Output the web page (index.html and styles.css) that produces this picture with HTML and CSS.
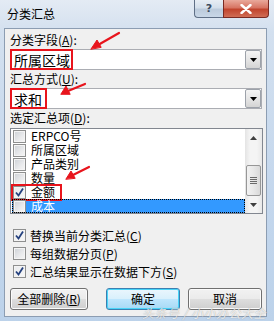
FILE: index.html
```html
<!DOCTYPE html>
<html lang="zh-CN">
<head>
    <meta charset="UTF-8">
    <title>分类汇总</title>
    <link rel="stylesheet" href="styles.css">
</head>
<body>
<div class="window">
    <div class="titlebar">
        <span class="title">分类汇总</span>
        <div class="caption-buttons">
            <span class="cap-btn help">?</span>
            <span class="cap-btn close">
                <svg width="12" height="10" viewBox="0 0 12 10"><path d="M1.5 1 L10.5 9 M10.5 1 L1.5 9" stroke="#fff" stroke-width="2.4" stroke-linecap="round"/></svg>
            </span>
        </div>
    </div>

    <div class="client">
        <div class="label">分类字段(<u>A</u>):</div>
        <div class="combo">
            <span class="value marked wide">所属区域</span>
            <span class="drop"><svg width="7" height="4" viewBox="0 0 7 4"><path d="M0 0 H7 L3.5 4 Z" fill="#000"/></svg></span>
        </div>

        <div class="label">汇总方式(<u>U</u>):</div>
        <div class="combo">
            <span class="value marked narrow">求和</span>
            <span class="drop"><svg width="7" height="4" viewBox="0 0 7 4"><path d="M0 0 H7 L3.5 4 Z" fill="#000"/></svg></span>
        </div>

        <div class="label last">选定汇总项(<u>D</u>):</div>
        <div class="listbox">
            <ul class="items">
                <li><span class="cb"></span>ERPCO号</li>
                <li><span class="cb"></span>所属区域</li>
                <li><span class="cb"></span>产品类别</li>
                <li><span class="cb"></span>数量</li>
                <li><span class="item-mark"><span class="cb checked"><svg width="11" height="11" viewBox="0 0 11 11"><path d="M2 5.5 L4.5 8.5 L9 1.5" fill="none" stroke="#24407e" stroke-width="1.8"/></svg></span>金额</span></li>
                <li class="selected"><span class="cb"></span>成本</li>
            </ul>
            <div class="scrollbar">
                <span class="sb-arrow"><svg width="7" height="4" viewBox="0 0 7 4"><path d="M0 4 H7 L3.5 0 Z" fill="#404040"/></svg></span>
                <span class="sb-track">
                    <span class="sb-thumb"><i></i><i></i><i></i><i></i></span>
                </span>
                <span class="sb-arrow"><svg width="7" height="4" viewBox="0 0 7 4"><path d="M0 0 H7 L3.5 4 Z" fill="#404040"/></svg></span>
            </div>
        </div>

        <div class="options">
            <div class="opt"><span class="cb checked"><svg width="11" height="11" viewBox="0 0 11 11"><path d="M2 5.5 L4.5 8.5 L9 1.5" fill="none" stroke="#24407e" stroke-width="1.8"/></svg></span>替换当前分类汇总(<u>C</u>)</div>
            <div class="opt"><span class="cb"></span>每组数据分页(<u>P</u>)</div>
            <div class="opt"><span class="cb checked"><svg width="11" height="11" viewBox="0 0 11 11"><path d="M2 5.5 L4.5 8.5 L9 1.5" fill="none" stroke="#24407e" stroke-width="1.8"/></svg></span>汇总结果显示在数据下方(<u>S</u>)</div>
        </div>

        <div class="buttons">
            <button class="btn remove">全部删除(<u>R</u>)</button>
            <button class="btn default">确定</button>
            <button class="btn">取消</button>
        </div>
    </div>

    <!-- red annotation arrows -->
    <svg class="arrows" width="274" height="321" viewBox="0 0 274 321">
        <g stroke="#e8141c" stroke-width="2.2" stroke-linecap="round" fill="#e8141c">
            <line x1="119" y1="33" x2="98" y2="45"/>
            <polygon points="91,49 97,40 101,47" stroke-width="1"/>
            <line x1="85" y1="84" x2="68" y2="91"/>
            <polygon points="61,94 66,86 70,94" stroke-width="1"/>
            <line x1="89" y1="167" x2="73" y2="175"/>
            <polygon points="66,179 71,171 75,178" stroke-width="1"/>
        </g>
    </svg>

    <span class="watermark">头条号 / 小小办公大全</span>
</div>
</body>
</html>
```

FILE: styles.css
```css
* {
  box-sizing: border-box;
  margin: 0;
  padding: 0;
}

html, body {
  width: 274px;
  height: 321px;
  overflow: hidden;
}

body {
  font-family: "Noto Sans CJK SC", "DejaVu Sans", sans-serif;
  font-size: 12px;
  color: #000;
}

.window {
  position: relative;
  height: 321px;
  display: flex;
  flex-direction: column;
  background: linear-gradient(180deg, #e4ebf4 0%, #d3e0ef 10%, #c4d7ed 60%, #bcd2ea 100%);
}

/* title bar */
.titlebar {
  height: 28px;
  display: flex;
  justify-content: space-between;
  align-items: flex-start;
  padding: 0 5px 0 7px;
}

.title {
  font-size: 12px;
  line-height: 27px;
}

.caption-buttons {
  display: flex;
}

.cap-btn {
  height: 18px;
  display: flex;
  align-items: center;
  justify-content: center;
  border: 1px solid #5f6f86;
  border-top: none;
}

.help {
  width: 29px;
  border-right: none;
  border-radius: 0 0 0 4px;
  background: linear-gradient(180deg, #e7edf4 0%, #d4dfeb 45%, #bccbdc 55%, #c9d7e7 100%);
  color: #3b4a5e;
  font-family: "DejaVu Sans", sans-serif;
  font-size: 11px;
  font-weight: bold;
  line-height: 1;
}

.close {
  width: 46px;
  border-color: #7a2a22;
  border-radius: 0 0 4px 0;
  background: linear-gradient(180deg, #e9a99b 0%, #d77563 45%, #c1442d 55%, #d06d55 100%);
}

/* client area */
.client {
  flex: 1;
  margin: 0 7px 4px 4px;
  padding: 4px 4px 0 5px;
  background: #f0f0f0;
  border: 1px solid #8c9db2;
}

.label {
  line-height: 14px;
  height: 14px;
  margin-bottom: 2px;
  white-space: nowrap;
}

.label.last {
  margin-bottom: 3px;
}

.combo {
  height: 21px;
  margin-bottom: 2px;
  display: flex;
  justify-content: space-between;
  background: #fff;
  border: 1px solid #abadb3;
}

.value {
  display: flex;
  align-items: center;
  font-size: 14px;
  line-height: 1;
  padding-left: 2px;
}

.value.marked {
  margin: -1px 0 -1px -1px;
  border: 2px solid #e8141c;
}

.value.wide {
  width: 63px;
}

.value.narrow {
  width: 37px;
}

.drop {
  width: 16px;
  display: flex;
  align-items: center;
  justify-content: center;
  border: 1px solid #9da2aa;
  border-radius: 2px;
  background: linear-gradient(180deg, #f4f4f4 0%, #e6e6e6 50%, #d4d4d4 100%);
}

/* list box */
.listbox {
  height: 86px;
  width: 253px;
  display: flex;
  background: #fff;
  border: 1px solid #828790;
}

.items {
  flex: 1;
  list-style: none;
  padding-left: 1px;
}

.items li {
  height: 14px;
  display: flex;
  align-items: center;
  padding-left: 1px;
  line-height: 14px;
  white-space: nowrap;
}

.items li.selected {
  background: #3399ff;
  color: #fff;
  outline: 1px dotted #000;
  outline-offset: -1px;
}

.item-mark {
  display: flex;
  align-items: center;
  width: 47px;
  height: 13px;
  outline: 2px solid #e8141c;
  outline-offset: 0;
}

.cb {
  width: 13px;
  height: 13px;
  flex: none;
  margin-right: 5px;
  display: flex;
  align-items: center;
  justify-content: center;
  border: 1px solid #8e8f8f;
  background: linear-gradient(135deg, #cdd1d6 0%, #e9eaec 60%, #f6f6f6 100%);
  box-shadow: inset 0 0 0 1px #f4f4f4;
}

.cb.checked {
  background: linear-gradient(135deg, #e9ebee 0%, #f7f7f7 100%);
}

/* scroll bar */
.scrollbar {
  width: 17px;
  display: flex;
  flex-direction: column;
  background: linear-gradient(90deg, #e4e4e4 0%, #f4f4f4 30%, #f4f4f4 70%, #e8e8e8 100%);
}

.sb-arrow {
  height: 17px;
  display: flex;
  align-items: center;
  justify-content: center;
}

.sb-track {
  flex: 1;
  display: flex;
  flex-direction: column;
  justify-content: flex-end;
}

.sb-thumb {
  height: 31px;
  margin: 0 1px;
  display: flex;
  flex-direction: column;
  align-items: center;
  justify-content: center;
  gap: 1px;
  border: 1px solid #979797;
  border-radius: 2px;
  background: linear-gradient(90deg, #f2f2f2 0%, #e8e8e8 50%, #d9d9d9 100%);
}

.sb-thumb i {
  width: 7px;
  height: 1px;
  background: #6a6a6a;
}

/* options */
.options {
  margin-top: 12px;
}

.opt {
  height: 18px;
  display: flex;
  align-items: center;
  padding-left: 3px;
  white-space: nowrap;
}

.opt .cb {
  margin-right: 4px;
}

/* buttons */
.buttons {
  margin-top: 8px;
  display: flex;
  gap: 8px;
}

.btn {
  width: 74px;
  height: 22px;
  font-family: inherit;
  font-size: 12px;
  line-height: 1;
  color: #000;
  border: 1px solid #707070;
  border-radius: 3px;
  background: linear-gradient(180deg, #f2f2f2 0%, #ebebeb 48%, #dddddd 52%, #cfcfcf 100%);
  box-shadow: inset 0 0 0 1px #fbfbfb;
}

.btn.remove {
  width: 78px;
  margin-right: auto;
}

.btn.default {
  border-color: #3c7fb1;
  box-shadow: inset 0 0 0 1px #48d4f8;
  background: linear-gradient(180deg, #eaf6fd 0%, #d9f0fc 48%, #bee6fd 52%, #a7d9f5 100%);
}

.arrows {
  position: absolute;
  top: 0;
  left: 0;
  pointer-events: none;
}

.watermark {
  position: absolute;
  right: 8px;
  bottom: 2px;
  font-size: 12px;
  line-height: 13px;
  font-style: italic;
  color: rgba(255, 255, 255, 0.8);
  text-shadow: 0 0 1px rgba(90, 90, 90, 0.6);
  letter-spacing: 0.5px;
  pointer-events: none;
}
```
